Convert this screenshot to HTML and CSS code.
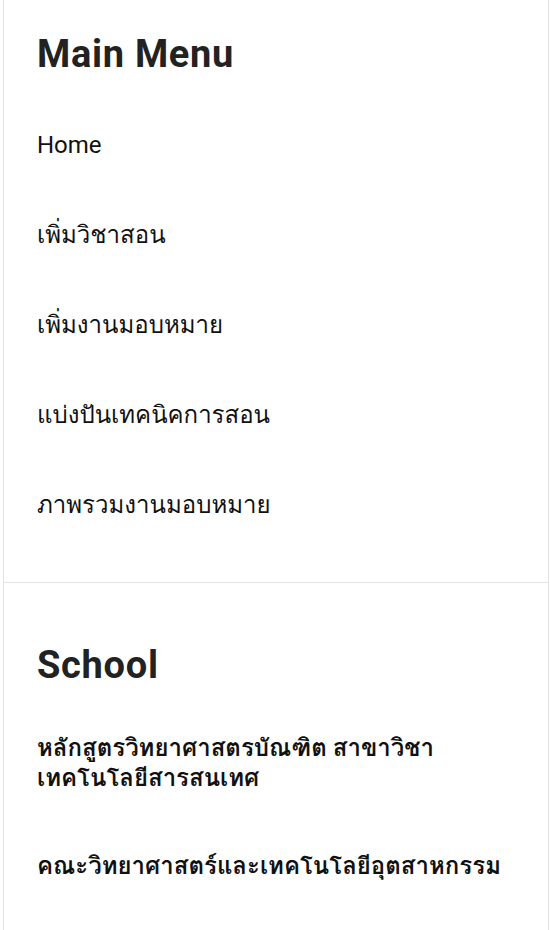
FILE: index.html
```html
<!DOCTYPE html>
<html lang="th">
<head>
<meta charset="utf-8">
<title>Menu</title>
<link rel="stylesheet" href="styles.css">
</head>
<body>
<aside class="sidebar">
  <section class="block block-main">
    <h2 class="block-title">Main Menu</h2>
    <ul class="menu">
      <li class="menu-item"><a href="#">Home</a></li>
      <li class="menu-item"><a href="#">เพิ่มวิชาสอน</a></li>
      <li class="menu-item"><a href="#">เพิ่มงานมอบหมาย</a></li>
      <li class="menu-item"><a href="#">แบ่งปันเทคนิคการสอน</a></li>
      <li class="menu-item"><a href="#">ภาพรวมงานมอบหมาย</a></li>
    </ul>
  </section>
  <section class="block block-school">
    <h2 class="block-title">School</h2>
    <ul class="menu menu-school">
      <li class="menu-item"><a href="#">หลักสูตรวิทยาศาสตรบัณฑิต สาขาวิชา<br>เทคโนโลยีสารสนเทศ</a></li>
      <li class="menu-item"><a href="#">คณะวิทยาศาสตร์และเทคโนโลยีอุตสาหกรรม</a></li>
    </ul>
  </section>
</aside>
</body>
</html>
```
FILE: styles.css
```css
html, body {
  margin: 0;
  padding: 0;
  background: #ffffff;
}

body {
  font-family: Roboto, Waree, Loma, Garuda, "Noto Sans", sans-serif;
  color: #111111;
}

.sidebar {
  margin-left: 3px;
  width: 544px;
  min-height: 930px;
  border-left: 1px solid #e2e2e2;
  border-right: 1px solid #e2e2e2;
  box-sizing: content-box;
}

.block {
  padding: 0 33px;
}

.block-main {
  padding-top: 31px;
  padding-bottom: 32px;
}

.block-school {
  border-top: 1px solid #e2e2e2;
  padding-top: 59px;
}

.block-title {
  margin: 0;
  font-size: 38px;
  line-height: 46px;
  font-weight: 700;
  color: #222222;
  letter-spacing: 0.7px;
}

.menu {
  list-style: none;
  margin: 0;
  padding: 0;
  margin-top: 23px;
}

.menu-item {
  padding: 30px 0;
  font-size: 24px;
  line-height: 30px;
}

.menu-item a {
  color: #111111;
  text-decoration: none;
}

.menu-school {
  margin-top: 15px;
}

.menu-school .menu-item {
  font-weight: 700;
}

.menu-school .menu-item:first-child {
  padding-bottom: 28px;
}
```
